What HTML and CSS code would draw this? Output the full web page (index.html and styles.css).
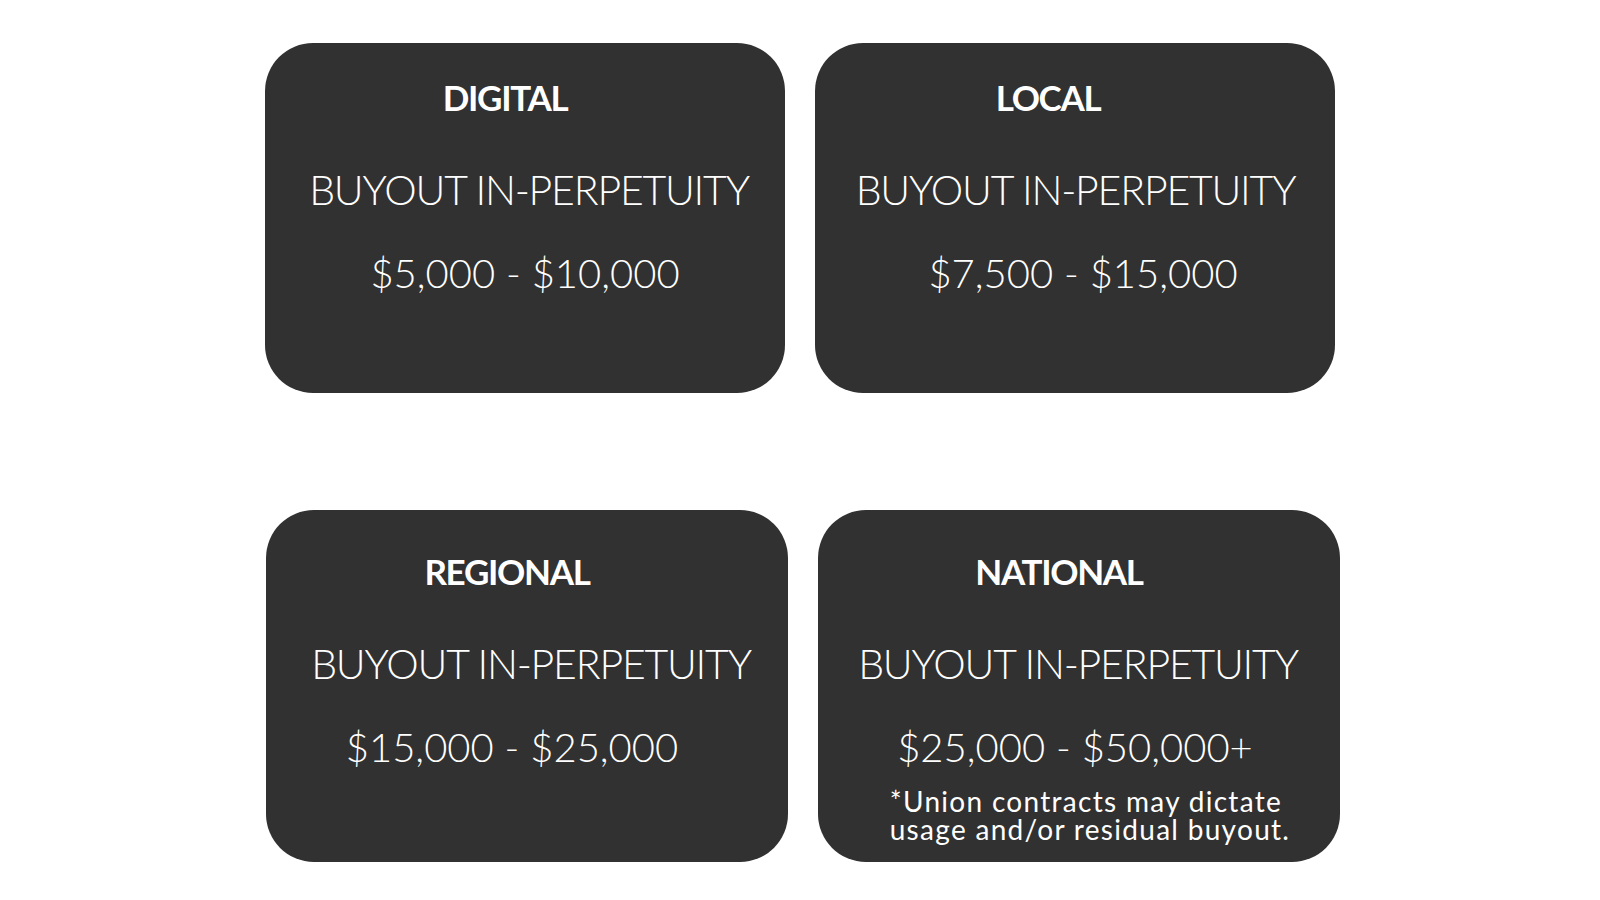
FILE: index.html
```html
<!DOCTYPE html>
<html lang="en">
<head>
<meta charset="utf-8">
<title>Buyout Rates</title>
<link rel="stylesheet" href="styles.css">
</head>
<body>
<main class="grid">
  <section class="card">
    <h2 class="card__title">DIGITAL</h2>
    <p class="card__term">BUYOUT IN-PERPETUITY</p>
    <p class="card__price">$5,000 - $10,000</p>
  </section>
  <section class="card">
    <h2 class="card__title card__title--local">LOCAL</h2>
    <p class="card__term card__term--tight">BUYOUT IN-PERPETUITY</p>
    <p class="card__price card__price--right">$7,500 - $15,000</p>
  </section>
  <section class="card card--low">
    <h2 class="card__title">REGIONAL</h2>
    <p class="card__term">BUYOUT IN-PERPETUITY</p>
    <p class="card__price card__price--left">$15,000 - $25,000</p>
  </section>
  <section class="card card--low card--shift">
    <h2 class="card__title">NATIONAL</h2>
    <p class="card__term card__term--tighter">BUYOUT IN-PERPETUITY</p>
    <p class="card__price card__price--slight">$25,000 - $50,000+</p>
    <p class="card__note">*Union contracts may dictate<br>usage and/or residual buyout.</p>
  </section>
</main>
</body>
</html>
```

FILE: styles.css
```css
* { box-sizing: border-box; }
html, body {
  margin: 0;
  padding: 0;
  background: #ffffff;
}
body {
  width: 1600px;
  height: 900px;
  overflow: hidden;
  font-family: "Lato", "Liberation Sans", sans-serif;
  color: #ffffff;
}
.grid {
  display: grid;
  grid-template-columns: 520px 520px;
  grid-template-rows: 350px 352px;
  column-gap: 30px;
  row-gap: 117px;
  padding: 43px 0 0 265px;
}
.card {
  background: #313131;
  border-radius: 48px;
  display: flex;
  flex-direction: column;
  align-items: center;
  padding-top: 34px;
}
.card--low {
  padding-top: 41px;
  width: 522px;
  margin-left: 1px;
}
.card--shift {
  margin-left: 3px;
}
.card__title {
  margin: 0 40px 0 0;
  font-weight: 700;
  font-size: 35px;
  line-height: 40px;
  letter-spacing: -1.3px;
}
.card__title--local {
  margin-right: 54px;
}
.card__term {
  margin: 47px 0 0 8px;
  font-weight: 300;
  font-size: 41px;
  line-height: 52px;
  letter-spacing: -1.2px;
}
.card__term--tight { margin-left: 1px; }
.card__term--tighter { margin-left: -2px; }
.card__price {
  margin: 31px 0 0 0;
  font-weight: 300;
  font-size: 40px;
  line-height: 52px;
  letter-spacing: 0;
}
.card__price--right { margin-left: 16px; }
.card__price--left { margin-right: 30px; }
.card__price--slight { margin-right: 8px; }
.card__note {
  margin: 14px 0 0 22px;
  font-weight: 400;
  font-size: 28px;
  line-height: 28px;
  letter-spacing: 1.3px;
  text-align: left;
}
```
